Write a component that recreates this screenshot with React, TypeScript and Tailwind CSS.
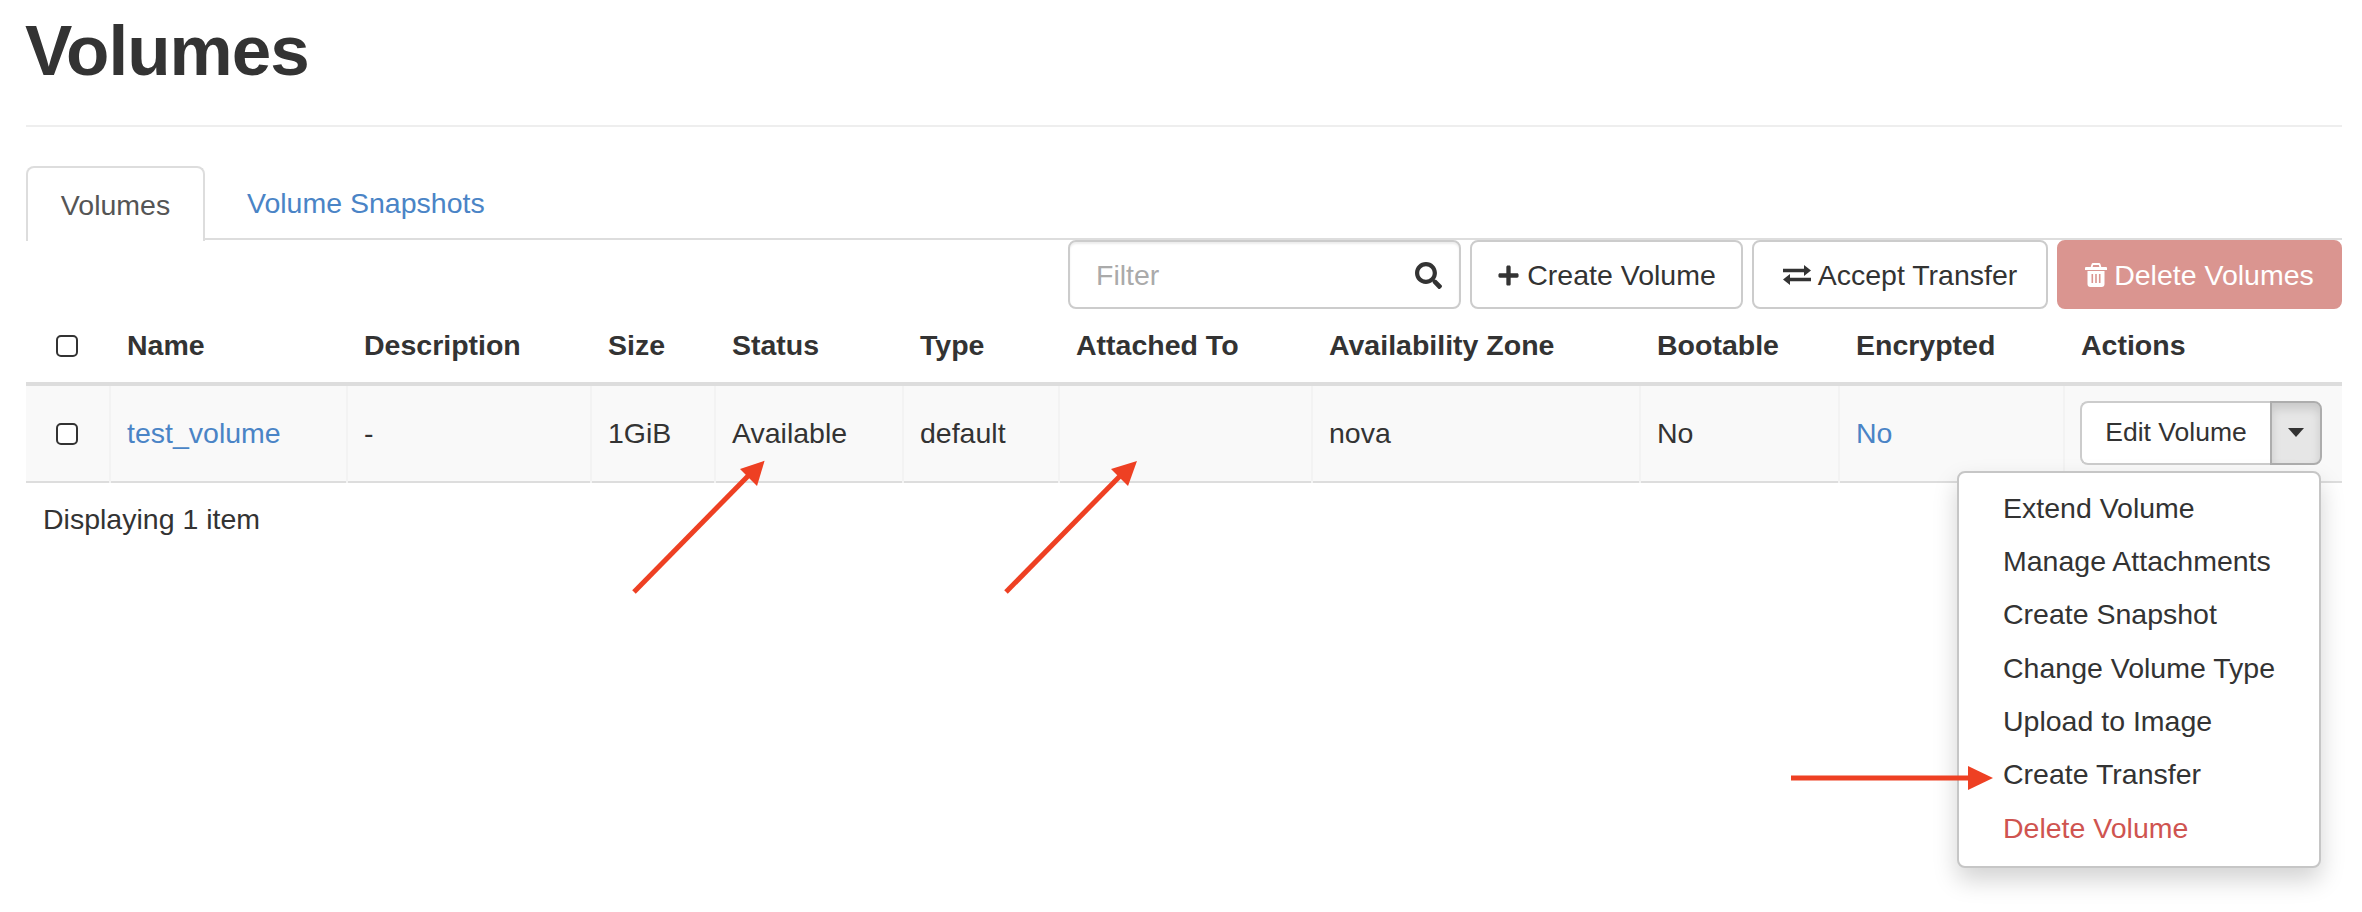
import { FaSearch, FaPlus } from 'react-icons/fa'

const columns = [
  { label: 'Name', width: 'w-[237px]' },
  { label: 'Description', width: 'w-[244px]' },
  { label: 'Size', width: 'w-[124px]' },
  { label: 'Status', width: 'w-[188px]' },
  { label: 'Type', width: 'w-[156px]' },
  { label: 'Attached To', width: 'w-[253px]' },
  { label: 'Availability Zone', width: 'w-[328px]' },
  { label: 'Bootable', width: 'w-[199px]' },
  { label: 'Encrypted', width: 'w-[225px]' },
  { label: 'Actions', width: 'w-[278px]' },
]

const menuItems = ['Extend Volume', 'Manage Attachments', 'Create Snapshot', 'Change Volume Type', 'Upload to Image', 'Create Transfer']

const cellClass = 'border-l-2 border-[#f3f3f3] pl-[16px] align-middle'

function Checkbox() {
  return <input type="checkbox" className="block appearance-none w-[22px] h-[22px] ml-[30px] rounded-[5px] border-2 border-[#333] bg-white" />
}

function ToolbarButton({ children, className }: { children: React.ReactNode; className: string }) {
  return (
    <button className={`flex items-center justify-center gap-[7px] h-[69px] rounded-[8px] border-2 pt-[1px] ${className}`}>
      {children}
    </button>
  )
}

// fa-exchange from Font Awesome 4, the package only has the newer shape
function ExchangeIcon() {
  return (
    <svg width="28" height="20" viewBox="0 0 28 20" fill="currentColor">
      <path d="M0 3.7h21V0l7 5.5-7 5.5V7.3H0z" />
      <path d="M28 12.7H7V9l-7 5.5L7 20v-3.7h21z" />
    </svg>
  )
}

function TrashIcon() {
  return (
    <svg width="22" height="24" viewBox="0 0 22 24" fill="currentColor" fillRule="evenodd">
      <path d="M8 0h6a1.5 1.5 0 0 1 1.4 1L16.3 4H21a1 1 0 0 1 1 1v2H0V5a1 1 0 0 1 1-1h4.7l.9-3A1.5 1.5 0 0 1 8 0z M7.6 4h6.8l-.6-2H8.2z" />
      <path d="M2.5 8h17v13a3 3 0 0 1-3 3h-11a3 3 0 0 1-3-3z M6.5 11v9h1.6v-9z M10.2 11v9h1.6v-9z M13.9 11v9h1.6v-9z" />
    </svg>
  )
}

export default function App() {
  return (
    <div className="relative h-[912px] overflow-hidden bg-white pl-[26px] pr-[20px] text-[28.5px] text-[#333] font-['Liberation_Sans',Arial,sans-serif]">
      <h1 className="h-[127px] border-b-2 border-[#eeeeee] pt-[1px] text-[71px] leading-[100px] font-bold tracking-[-1px] indent-[-1px]">Volumes</h1>

      <ul className="flex mt-[39px] h-[74px] border-b-2 border-[#dddddd]">
        <li className="h-[75px] w-[179px] rounded-t-[8px] border-2 border-b-0 border-[#dddddd] bg-white text-center leading-[74px] text-[#555]">Volumes</li>
        <li className="ml-[42px] leading-[75px] text-[#4a84c6]">Volume Snapshots</li>
      </ul>

      <div className="flex justify-end gap-[9px] h-[69px]">
        <div className="flex items-center justify-between w-[393px] rounded-[8px] border-2 border-[#cccccc] pl-[26px] pr-[17px] pt-[1px] shadow-[inset_0_2px_2px_rgba(0,0,0,0.075)]">
          <span className="text-[#aaaaaa]">Filter</span>
          <FaSearch className="w-[27px] h-[27px] text-[#333]" />
        </div>
        <ToolbarButton className="w-[273px] border-[#cccccc] bg-white"><FaPlus className="w-[23px] h-[23px]" />Create Volume</ToolbarButton>
        <ToolbarButton className="w-[296px] border-[#cccccc] bg-white"><ExchangeIcon />Accept Transfer</ToolbarButton>
        <ToolbarButton className="w-[285px] border-[#da9590] bg-[#da9590] text-white"><TrashIcon />Delete Volumes</ToolbarButton>
      </div>

      <table className="table-fixed w-full border-collapse">
        <colgroup>
          <col className="w-[84px]" />
          {columns.map((c) => <col key={c.label} className={c.width} />)}
        </colgroup>
        <thead>
          <tr className="h-[75px] border-b-4 border-[#dddddd]">
            <th className="align-middle"><Checkbox /></th>
            {columns.map((c) => <th key={c.label} className="pl-[17px] text-left font-bold align-middle">{c.label}</th>)}
          </tr>
        </thead>
        <tbody>
          <tr className="h-[98px] border-b-2 border-[#dddddd] bg-[#f9f9f9]">
            <td className="align-middle"><Checkbox /></td>
            <td className={cellClass}><a className="text-[#4a84c6]">test_volume</a></td>
            <td className={cellClass}>-</td>
            <td className={cellClass}>1GiB</td>
            <td className={cellClass}>Available</td>
            <td className={cellClass}>default</td>
            <td className={cellClass}></td>
            <td className={cellClass}>nova</td>
            <td className={cellClass}>No</td>
            <td className={cellClass}><a className="text-[#4a84c6]">No</a></td>
            <td className={cellClass}>
              <div className="relative flex w-[242px] h-[64px] -ml-[1px] mb-[2px]">
                <button className="w-[190px] rounded-l-[8px] border-2 border-r-0 border-[#cccccc] bg-white text-[26.5px]">Edit Volume</button>
                <button className="flex flex-1 items-center justify-center rounded-r-[8px] border-2 border-[#adadad] bg-[#e6e6e6] shadow-[inset_0_6px_10px_rgba(0,0,0,0.125)]">
                  <span className="border-x-[8px] border-t-[9px] border-x-transparent border-t-[#333]" />
                </button>
                <div className="absolute right-[1px] top-full mt-[6px] w-[364px] rounded-[8px] border-2 border-[#c6c6c6] bg-white pt-[9px] pb-[11px] shadow-[0_12px_24px_rgba(0,0,0,0.175)]">
                  {menuItems.map((item) => (
                    <div key={item} className="h-[53.4px] pl-[44px] leading-[53px]">{item}</div>
                  ))}
                  <div className="h-[53.4px] pl-[44px] leading-[53px] text-[#cf5450]">Delete Volume</div>
                </div>
              </div>
            </td>
          </tr>
        </tbody>
      </table>

      <div className="flex items-center h-[72px] pl-[17px]">Displaying 1 item</div>

      {/* annotation arrows */}
      <svg className="absolute inset-0 pointer-events-none" width="2362" height="912" viewBox="0 0 2362 912" fill="none">
        <path d="M634 592L750 474" stroke="#ee4023" strokeWidth="5" />
        <path d="M764.6 460.7L740 469L757 486Z" fill="#ee4023" />
        <path d="M1006 592L1122 474" stroke="#ee4023" strokeWidth="5" />
        <path d="M1137 461L1111 469L1128 486Z" fill="#ee4023" />
        <path d="M1791 778H1970" stroke="#ee4023" strokeWidth="5" />
        <path d="M1993 778L1968 766V790Z" fill="#ee4023" />
      </svg>
    </div>
  )
}
